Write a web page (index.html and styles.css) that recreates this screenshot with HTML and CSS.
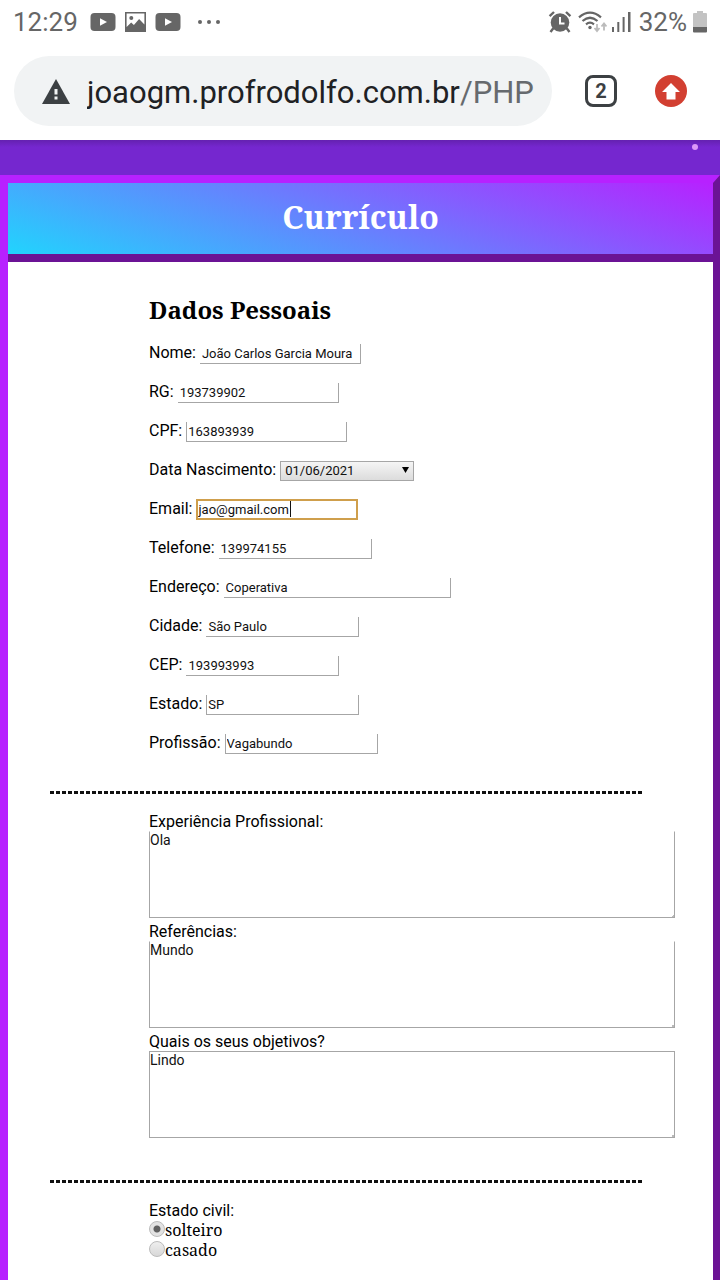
FILE: index.html
```html
<!DOCTYPE html>
<html lang="pt-BR">
<head>
<meta charset="utf-8">
<meta name="viewport" content="width=device-width, initial-scale=1">
<title>Currículo</title>
<link rel="stylesheet" href="styles.css">
</head>
<body>
<div class="status">
  <span class="clock">12:29</span>
  <svg class="tube" width="26" height="18" viewBox="0 0 26 18"><rect x=".5" width="25" height="18" rx="4" fill="#666"/><path d="M10 5.2v7.6l7-3.8z" fill="#fff"/></svg>
  <svg class="photo" width="21" height="20" viewBox="0 0 21 20"><path fill-rule="evenodd" d="M0 0h21v20H0zM1.6 1.6v13.5l4.6-4.7 2.7 2.7 5.2-6 5.3 5.5v-11z" fill="#666"/><circle cx="6.3" cy="6" r="2" fill="#666"/></svg>
  <svg class="tube" width="26" height="18" viewBox="0 0 26 18"><rect x=".5" width="25" height="18" rx="4" fill="#666"/><path d="M10 5.2v7.6l7-3.8z" fill="#fff"/></svg>
  <svg class="more" width="24" height="6" viewBox="0 0 24 6" fill="#666"><circle cx="3" cy="3" r="2"/><circle cx="12" cy="3" r="2"/><circle cx="21" cy="3" r="2"/></svg>
  <span class="spacer"></span>
  <svg class="alarm" width="24" height="24" viewBox="0 0 24 24"><circle cx="12" cy="12.5" r="9.3" fill="#666"/><path d="M1.6 6.2 6 2M22.4 6.2 18 2" stroke="#666" stroke-width="2.4"/><path d="m5.500 18-3 4M18.500 18l3 4" stroke="#666" stroke-width="2.400"/><path d="M12 7v6.500h4.500" fill="none" stroke="#fff" stroke-width="2"/></svg>
  <svg class="wifi" width="29" height="24" viewBox="0 0 29 24" fill="none" stroke="#666" stroke-width="2.2"><path d="M1 7.300Q12 -2 23 7.300M4.500 11Q12 4.500 19.500 11M8 14.300Q12 11 16 14.300"/><circle cx="12" cy="17.500" r="1.700" fill="#666" stroke="none"/><path d="M19 14v7m-2.500-3 2.500 3 2.500-3M26 20.500v-7m-2.500 3 2.500-3 2.500 3" stroke="#bbb" stroke-width="1.800"/></svg>
  <svg class="signal" width="19" height="22" viewBox="0 0 19 22" fill="#666"><rect y="16" width="2" height="5"/><rect x="5.300" y="11" width="2" height="10"/><rect x="10.600" y="6" width="2" height="15"/><rect x="16" y="1" width="2.500" height="20"/></svg>
  <span class="percent">32%</span>
  <svg class="battery" width="14" height="22" viewBox="0 0 14 22"><path d="M4 0h6v2h3q1 0 1 1v13H0V3q0-1 1-1h3z" fill="#c3c3c3"/><path d="M0 16h14v4.500q0 1-1 1H1q-1 0-1-1z" fill="#666"/></svg>
</div>
<header class="toolbar">
  <div class="address">
    <svg width="28" height="25" viewBox="0 0 28 25"><path d="M14 0 28 25H0z" fill="#3c4043"/><path d="M12.500 10h3v5.500h-3zM12.500 17.500h3v3h-3z" fill="#f1f3f4"/></svg>
    <span class="url">joaogm.profrodolfo.com.br<span class="path">/PHP</span></span>
  </div>
  <button class="tabs" type="button">2</button>
  <button class="update" type="button" aria-label="Atualizar"><svg width="18" height="17" viewBox="0 0 18 17"><path d="M9 0 18 9h-4.500v7.500h-9V9H0z" fill="#fff"/></svg></button>
</header>
<main class="page">
  <span class="spark"></span>
  <div class="card">
    <h1 class="title">Currículo</h1>
    <form class="form">
      <section class="group">
        <h2 class="subtitle">Dados Pessoais</h2>
        <div class="row"><label for="nome">Nome:</label><input id="nome" class="text" type="text" value="João Carlos Garcia Moura"></div>
        <div class="row"><label for="rg">RG:</label><input id="rg" class="text" type="text" value="193739902"></div>
        <div class="row"><label for="cpf">CPF:</label><input id="cpf" class="text lined" type="text" value="163893939"></div>
        <div class="row"><label for="data">Data Nascimento:</label><span class="picker"><select id="data" class="date"><option>01/06/2021</option></select><svg class="arrow" width="7" height="7" viewBox="0 0 7 7"><path d="M0 0h7L3.500 6z"/></svg></span></div>
        <div class="row"><label for="email">Email:</label><span class="picker"><input id="email" class="text active" type="email" value="jao@gmail.com"><span class="caret"></span></span></div>
        <div class="row"><label for="fone">Telefone:</label><input id="fone" class="text short" type="tel" value="139974155"></div>
        <div class="row"><label for="rua">Endereço:</label><input id="rua" class="text long" type="text" value="Coperativa"></div>
        <div class="row"><label for="cidade">Cidade:</label><input id="cidade" class="text short" type="text" value="São Paulo"></div>
        <div class="row"><label for="cep">CEP:</label><input id="cep" class="text short" type="text" value="193993993"></div>
        <div class="row"><label for="estado">Estado:</label><input id="estado" class="text short lined" type="text" value="SP"></div>
        <div class="row"><label for="prof">Profissão:</label><input id="prof" class="text short lined" type="text" value="Vagabundo"></div>
      </section>
      <hr class="rule">
      <section class="group answers">
        <label class="block" for="exp">Experiência Profissional:</label>
        <textarea id="exp" class="area">Ola</textarea>
        <label class="block" for="ref">Referências:</label>
        <textarea id="ref" class="area">Mundo</textarea>
        <label class="block" for="obj">Quais os seus objetivos?</label>
        <textarea id="obj" class="area boxed">Lindo</textarea>
      </section>
      <hr class="rule">
      <fieldset class="group civil">
        <legend class="block">Estado civil:</legend>
        <label class="choice"><input class="radio" type="radio" name="civil" checked>solteiro</label>
        <label class="choice"><input class="radio" type="radio" name="civil">casado</label>
      </fieldset>
    </form>
  </div>
</main>
</body>
</html>
```
FILE: styles.css
```css
* { box-sizing: border-box; }
body {
  margin: 0;
  min-height: 100vh;
  display: flex;
  flex-direction: column;
  background: #fff;
  color: #000;
  font: 16px/19px Roboto, sans-serif;
}
svg { display: block; flex: none; }
button { padding: 0; font-family: inherit; }

.status {
  display: flex;
  align-items: center;
  height: 42px;
  padding: 2px 13px 0;
  color: #666;
  font-size: 26px;
  line-height: 40px;
}
.clock { margin-right: 12px; }
.photo { margin: 0 9px; }
.more { margin-left: 16px; }
.spacer { flex: 1; }
.alarm { margin-right: 6px; }
.wifi { margin-right: 5px; }
.signal { margin-right: 8px; }
.percent { margin-right: 6px; }

.toolbar {
  display: flex;
  align-items: center;
  height: 98px;
  padding: 0 33px 0 14px;
}
.address {
  flex: 1;
  min-width: 0;
  display: flex;
  align-items: center;
  gap: 17px;
  height: 70px;
  padding: 0 16px 0 28px;
  border-radius: 35px;
  background: #f1f3f4;
}
.url {
  flex: 1;
  overflow: hidden;
  padding-top: 4px;
  white-space: nowrap;
  color: #202124;
  font-size: 31px;
  line-height: 42px;
}
.path { color: #666a6e; }
.tabs {
  width: 32px;
  height: 32px;
  margin: 0 38px 0 33px;
  border: 3px solid #3c4043;
  border-radius: 8px;
  background: none;
  color: #3c4043;
  font-size: 20px;
  font-weight: 700;
  line-height: 26px;
}
.update {
  display: flex;
  align-items: center;
  justify-content: center;
  width: 32px;
  height: 32px;
  border: 0;
  border-radius: 50%;
  background: #d23f31;
}

.page {
  position: relative;
  flex: 1;
  display: flex;
  flex-direction: column;
  padding-top: 35px;
  background: linear-gradient(#6421b0, #7527cf 7px);
}
.spark {
  position: absolute;
  top: 4px;
  right: 22px;
  width: 6px;
  height: 6px;
  border-radius: 50%;
  background: #dc98f8;
}
.card {
  flex: 1;
  border: 8px solid #b721ff;
  border-right: 7px solid #6b1395;
  border-bottom: 0;
  background: #fff;
}
.title {
  margin: 0;
  padding-bottom: 3px;
  border-bottom: 8px solid #6b1395;
  background: linear-gradient(19deg, #21d4fd, #b721ff);
  color: #fff;
  font: 700 32px/68px "Noto Serif", "DejaVu Serif Condensed", serif;
  text-align: center;
}
.form { padding-top: 32px; }
.group { margin-left: 20%; }
.subtitle {
  margin: 0 0 7px;
  font: 700 24px/32px "Noto Serif", "DejaVu Serif Condensed", serif;
}
.row {
  display: flex;
  align-items: center;
  gap: 4px;
  height: 39px;
}
.text {
  width: 161px;
  height: 20px;
  margin-top: 2px;
  padding: 1px 2px;
  border: 0 solid #a6a6a6;
  border-width: 0 1px 1px 0;
  border-radius: 0;
  background: #fff;
  color: #111;
  font: 13px/18px Roboto, sans-serif;
}
.short { width: 153px; }
.long { width: 227px; }
.lined { border-left-width: 1px; padding-left: 1px; }
.active {
  display: block;
  width: 162px;
  height: 21px;
  padding: 0;
  border: 2px solid #cf9f4c;
}
.picker { position: relative; }
.caret {
  position: absolute;
  top: 4px;
  left: 94px;
  width: 1px;
  height: 16px;
  background: #111;
}
.date {
  display: block;
  appearance: none;
  width: 134px;
  height: 20px;
  margin-top: 2px;
  padding: 0 4px;
  border: 1px solid #a6a6a6;
  border-radius: 0;
  background: linear-gradient(#f5f5f5, #dcdcdc);
  color: #111;
  font: 13px/18px Roboto, sans-serif;
}
.arrow {
  position: absolute;
  top: 8px;
  right: 5px;
  pointer-events: none;
}
.rule {
  width: 84%;
  height: 3px;
  margin: 29px 0 18px 6%;
  border: 0;
  background: repeating-linear-gradient(90deg, #111 0 4px, #fff 4px 6px);
}
.block { display: block; padding: 0; }
.area {
  display: block;
  width: 526px;
  max-width: calc(100% - 38px);
  height: 87px;
  margin: 0 0 4px;
  padding: 0;
  border: 1px solid #a6a6a6;
  border-top-color: transparent;
  background: linear-gradient(135deg, transparent 50%, #bbb 50%) right bottom / 3px 3px no-repeat #fff;
  color: #111;
  font: 14px/16px Roboto, sans-serif;
  resize: none;
}
.boxed { border-top-color: #a6a6a6; }
.answers { padding-bottom: 9px; }
.civil {
  min-width: 0;
  margin-top: 0;
  margin-bottom: 0;
  padding: 0 0 20px;
  border: 0;
}
.choice {
  display: flex;
  align-items: center;
  height: 20px;
  font: 16px/20px "Noto Serif", "DejaVu Serif Condensed", serif;
}
.radio {
  appearance: none;
  width: 16px;
  height: 16px;
  margin: 0 0 3px;
  border: 1px solid #bbb;
  border-radius: 50%;
  background: linear-gradient(#eee, #d8d8d8);
}
.radio:checked { background: radial-gradient(circle, #606060 0 3px, #e2e2e2 4px); }
```
